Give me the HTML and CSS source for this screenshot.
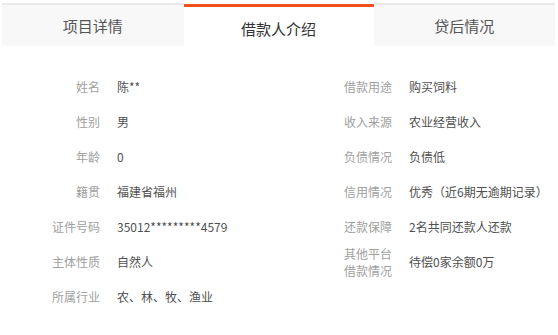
FILE: index.html
```html
<!DOCTYPE html>
<html lang="zh-CN">
<head>
  <meta charset="UTF-8">
  <meta name="viewport" content="width=device-width, initial-scale=1.0">
  <title>借款人介绍</title>
  <link rel="stylesheet" href="styles.css">
</head>
<body>
  <div class="tabs">
    <div class="tab">项目详情</div>
    <div class="tab active">借款人介绍</div>
    <div class="tab">贷后情况</div>
  </div>
  <div class="info">
    <div class="col">
      <div class="row"><span class="label">姓名</span><span class="value">陈**</span></div>
      <div class="row"><span class="label">性别</span><span class="value">男</span></div>
      <div class="row"><span class="label">年龄</span><span class="value">0</span></div>
      <div class="row"><span class="label">籍贯</span><span class="value">福建省福州</span></div>
      <div class="row"><span class="label">证件号码</span><span class="value">35012*********4579</span></div>
      <div class="row"><span class="label">主体性质</span><span class="value">自然人</span></div>
      <div class="row"><span class="label">所属行业</span><span class="value">农、林、牧、渔业</span></div>
    </div>
    <div class="col">
      <div class="row"><span class="label">借款用途</span><span class="value">购买饲料</span></div>
      <div class="row"><span class="label">收入来源</span><span class="value">农业经营收入</span></div>
      <div class="row"><span class="label">负债情况</span><span class="value">负债低</span></div>
      <div class="row"><span class="label">信用情况</span><span class="value">优秀（近6期无逾期记录）</span></div>
      <div class="row"><span class="label">还款保障</span><span class="value">2名共同还款人还款</span></div>
      <div class="row"><span class="label two">其他平台<br>借款情况</span><span class="value">待偿0家余额0万</span></div>
    </div>
  </div>
</body>
</html>
```

FILE: styles.css
```css
body{
  margin: 0;
  background-color: white;
  font-family: "Noto Sans CJK SC", "Liberation Sans", sans-serif;
}
.tabs{
  display: flex;
  margin: 3px 3px 0 2px;
}
.tab{
  flex: 1;
  height: 41px;
  line-height: 41px;
  text-align: center;
  font-size: 15px;
  color: #555;
  background-color: #f8f8f8;
  border-top: 2px solid #e9e9e9;
}
.tab.active{
  flex: 0 0 190px;
  margin-top: 1px;
  height: 39px;
  line-height: 44px;
  color: #333;
  background-color: white;
  border-top: 3px solid #f0501e;
}
.info{
  display: grid;
  grid-template-columns: 292px 1fr;
  padding: 23px 0 0 8px;
}
.row{
  display: flex;
  align-items: center;
  height: 35px;
  font-size: 12px;
}
.label{
  width: 92px;
  text-align: right;
  color: #a0a0a0;
  line-height: 17px;
}
.value{
  margin-left: 17px;
  color: #505050;
}
```
